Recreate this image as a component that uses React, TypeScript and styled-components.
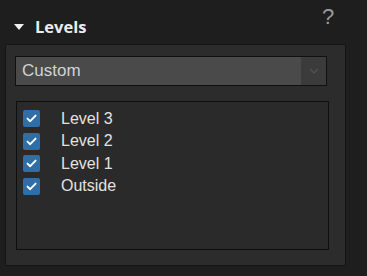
import React from "react";
import styled, { createGlobalStyle } from "styled-components";

const Global = createGlobalStyle`
  html, body { margin: 0; padding: 0; background: #1e1e1e; }
  body { width: 367px; height: 276px; overflow: hidden; font-family: "Liberation Sans", Arial, sans-serif; }
`;

const Page = styled.div`
  width: 367px;
  height: 276px;
  background: #1e1e1e;
  display: flex;
  flex-direction: column;
  box-sizing: border-box;
`;

const Header = styled.div`
  height: 44px;
  display: flex;
  align-items: flex-start;
  position: relative;
`;

const Title = styled.div`
  display: flex;
  align-items: center;
  margin-top: 17px;
  margin-left: 14px;
  gap: 11px;
  color: #ececec;
  font-family: "Open Sans", sans-serif;
  font-weight: 700;
  font-size: 16.5px;
  line-height: 20px;
`;

const Help = styled.div`
  position: absolute;
  left: 322px;
  top: 4px;
  color: #9a9a9a;
  font-family: "Liberation Sans", Arial, sans-serif;
  font-size: 22px;
  line-height: 26px;
`;

const Panel = styled.div`
  margin-left: 5px;
  width: 341px;
  height: 222px;
  box-sizing: border-box;
  background: #2c2c2c;
  border: 1px solid #141414;
  border-radius: 2px;
  padding: 11px 0 0 9px;
  display: flex;
  flex-direction: column;
  align-items: flex-start;
  gap: 15px;
`;

const Select = styled.div`
  width: 312px;
  height: 30px;
  box-sizing: border-box;
  border: 1px solid #101010;
  background: #4a4a4a;
  display: flex;
  align-items: stretch;
`;

const SelectText = styled.div`
  flex: 1;
  padding-left: 6px;
  display: flex;
  align-items: center;
  color: #d2d2d2;
  font-size: 17px;
`;

const SelectButton = styled.div`
  width: 25px;
  background: #3b3b3b;
  display: flex;
  align-items: center;
  justify-content: center;
`;

const List = styled.div`
  margin-left: 1px;
  width: 313px;
  height: 149px;
  box-sizing: border-box;
  border: 1.5px solid #0e0e0e;
  background: #2a2a2a;
  padding: 5.5px 0 0 6px;
  display: flex;
  flex-direction: column;
`;

const Row = styled.div`
  height: 22.5px;
  display: flex;
  align-items: center;
  gap: 21px;
  color: #e2e2e2;
  font-size: 16px;
`;

const Box = styled.div`
  width: 17px;
  height: 17px;
  border-radius: 2px;
  background: #2f6ea6;
  display: flex;
  align-items: center;
  justify-content: center;
`;

const Check = () => (
  <svg width="11" height="9" viewBox="0 0 11 9">
    <path d="M1.5 4.6 L4.2 7.2 L9.6 1.6" fill="none" stroke="#ffffff" strokeWidth="1.9" strokeLinecap="round" strokeLinejoin="round" />
  </svg>
);

const items = ["Level 3", "Level 2", "Level 1", "Outside"];

export default function App() {
  return (
    <Page>
      <Global />
      <Header>
        <Title>
          <svg width="10" height="6" viewBox="0 0 10 6">
            <path d="M0 0 H10 L5 6 Z" fill="#f0f0f0" />
          </svg>
          <span>Levels</span>
        </Title>
        <Help>?</Help>
      </Header>
      <Panel>
        <Select>
          <SelectText>Custom</SelectText>
          <SelectButton>
            <svg width="10" height="6" viewBox="0 0 10 6">
              <path d="M1 1 L5 5 L9 1" fill="none" stroke="#555" strokeWidth="1.2" />
            </svg>
          </SelectButton>
        </Select>
        <List>
          {items.map((t) => (
            <Row key={t}>
              <Box>
                <Check />
              </Box>
              <span>{t}</span>
            </Row>
          ))}
        </List>
      </Panel>
    </Page>
  );
}
